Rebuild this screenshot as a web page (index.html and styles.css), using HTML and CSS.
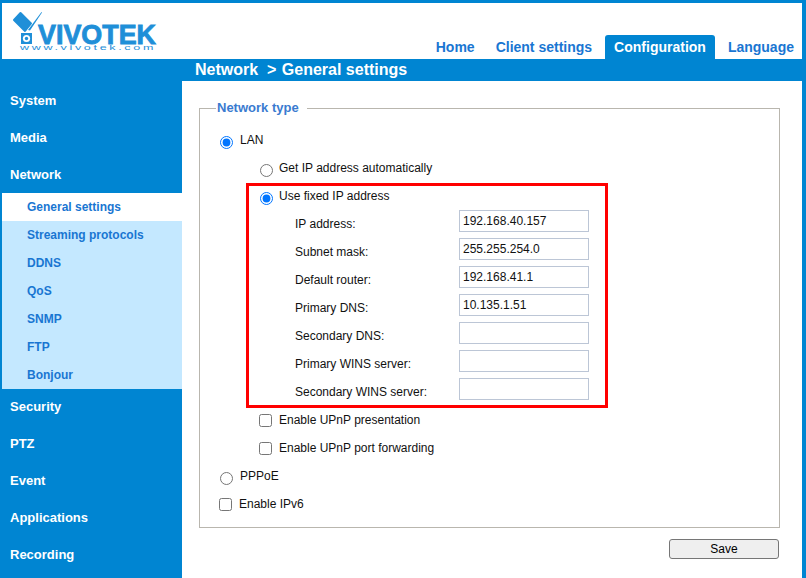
FILE: index.html
```html
<!DOCTYPE html>
<html lang="en">
<head>
<meta charset="utf-8">
<title>VIVOTEK Network General settings</title>
<link rel="stylesheet" href="styles.css">
</head>
<body>
<div class="page">
  <header class="top">
    <svg class="logo" width="150" height="44" viewBox="11 10 150 44" aria-label="VIVOTEK">
      <path class="head" d="M14 20 L20.5 13 L31 23.5 L25 31 Z"/>
      <path class="ink" d="M28 30 L41.5 12 L42 12.5 L30 30.5 Z"/>
      <rect class="ink" x="21" y="33" width="11" height="11"/>
      <circle cx="26.5" cy="38.5" r="3.6" fill="#fff"/>
      <circle class="ink" cx="26.5" cy="38.5" r="1.7"/>
      <text class="brand" x="38" y="44" textLength="118" lengthAdjust="spacingAndGlyphs">VIVOTEK</text>
      <text class="url" x="20" y="50" textLength="136" lengthAdjust="spacingAndGlyphs">www.vivotek.com</text>
    </svg>
    <nav class="tabs">
      <a class="tab first">Home</a>
      <a class="tab">Client settings</a>
      <a class="tab active">Configuration</a>
      <a class="tab">Language</a>
    </nav>
  </header>
  <div class="titlebar">Network &nbsp;<span class="crumb">&gt;</span> General settings</div>
  <div class="body">
    <aside class="side">
      <div class="item">System</div>
      <div class="item">Media</div>
      <div class="item">Network</div>
      <ul class="sub">
        <li class="current">General settings</li>
        <li>Streaming protocols</li>
        <li>DDNS</li>
        <li>QoS</li>
        <li>SNMP</li>
        <li>FTP</li>
        <li>Bonjour</li>
      </ul>
      <div class="item">Security</div>
      <div class="item">PTZ</div>
      <div class="item">Event</div>
      <div class="item">Applications</div>
      <div class="item">Recording</div>
    </aside>
    <main class="main">
      <fieldset class="box">
        <legend class="legend">Network type</legend>
        <label class="row lv1"><input class="rd" type="radio" name="t" checked><span>LAN</span></label>
        <label class="row lv2"><input class="rd" type="radio" name="ip"><span>Get IP address automatically</span></label>
        <div class="marked">
          <label class="row lv2"><input class="rd" type="radio" name="ip" checked><span>Use fixed IP address</span></label>
          <div class="row field"><span class="fl">IP address:</span><input class="txt" type="text" value="192.168.40.157"></div>
          <div class="row field"><span class="fl">Subnet mask:</span><input class="txt" type="text" value="255.255.254.0"></div>
          <div class="row field"><span class="fl">Default router:</span><input class="txt" type="text" value="192.168.41.1"></div>
          <div class="row field"><span class="fl">Primary DNS:</span><input class="txt" type="text" value="10.135.1.51"></div>
          <div class="row field"><span class="fl">Secondary DNS:</span><input class="txt" type="text"></div>
          <div class="row field"><span class="fl">Primary WINS server:</span><input class="txt" type="text"></div>
          <div class="row field"><span class="fl">Secondary WINS server:</span><input class="txt" type="text"></div>
          <div class="redbox"></div>
        </div>
        <label class="row lv2c"><input class="ck" type="checkbox"><span>Enable UPnP presentation</span></label>
        <label class="row lv2c"><input class="ck" type="checkbox"><span>Enable UPnP port forwarding</span></label>
        <label class="row lv1"><input class="rd" type="radio" name="t"><span>PPPoE</span></label>
        <label class="row lv1c"><input class="ck" type="checkbox"><span>Enable IPv6</span></label>
      </fieldset>
      <div class="actions"><button class="save" type="button">Save</button></div>
    </main>
  </div>
</div>
</body>
</html>
```
FILE: styles.css
```css
* { box-sizing: border-box; }
html, body { margin: 0; padding: 0; background: #fff; }
body { font-family: "Liberation Sans", Arial, sans-serif; font-size: 12px; color: #111; }
.page {
  width: 806px; height: 578px; overflow: hidden;
  border-top: 3px solid #0085d2; border-left: 2px solid #0085d2; border-right: 4px solid #0085d2;
  display: flex; flex-direction: column;
}
.top { height: 56px; display: flex; justify-content: space-between; align-items: flex-end; flex: none; }
.logo { display: block; margin: 0 0 5px 9px; overflow: hidden; }
.ink { fill: #1f8fd8; }
.head { fill: #1f8fd8; stroke: #1f8fd8; stroke-width: 2; stroke-linejoin: round; }
.brand { font: bold 28px "Liberation Sans", Arial, sans-serif; fill: #1f8fd8; stroke: #1f8fd8; stroke-width: .9; }
.url { font: 7px "Liberation Sans", Arial, sans-serif; letter-spacing: 1.5px; fill: #1f8fd8; }
.tabs { display: flex; gap: 4px; margin-right: -1px; }
.tab { display: block; height: 24px; padding: 0 9px; line-height: 25px; font-size: 14px; font-weight: bold; color: #1976d2; border-radius: 3px 3px 0 0; }
.tab.first { margin-right: -1px; }
.tab.active { background: #0085d2; color: #fff; }
.titlebar { height: 22px; flex: none; background: #0085d2; color: #fff; font-size: 16px; font-weight: bold; line-height: 22px; padding-left: 193px; }
.crumb { margin-right: 1px; }
.body { flex: 1; display: flex; min-height: 0; }
.side { width: 180px; flex: none; background: #0085d2; padding-top: 1px; }
.item { height: 37px; line-height: 38px; padding-left: 8px; font-size: 13px; font-weight: bold; color: #fff; }
.sub { list-style: none; margin: 0 0 -1px; padding: 0; background: #c4e8ff; }
.sub li { height: 28px; line-height: 28px; padding-left: 25px; font-size: 12px; font-weight: bold; color: #1976d2; }
.sub li.current { background: #fff; }
.main { flex: 1; padding: 0 22px 0 17px; }
.box { margin: 19px 0 0; padding: 9px 0 9px; width: 581px; border: 1px solid #b9b6ae; min-width: 0; }
.legend { margin-left: 16px; padding: 0 8px 2px 1px; font-size: 13px; font-weight: bold; color: #3a7bd0; }
.row { display: flex; height: 28px; align-items: center; }
.lv1 { padding-left: 20px; }
.lv2 { padding-left: 60px; }
.lv1c { padding-left: 19px; }
.lv2c { padding-left: 59px; }
.rd, .ck { width: 13px; height: 13px; margin: 0; flex: none; }
.rd { margin-top: 4px; margin-right: 7px; }
.lv2 .rd { margin-right: 6px; }
.ck { margin-top: 1px; margin-right: 7px; }
.field { padding-left: 95px; align-items: flex-start; }
.fl { width: 164px; line-height: 28px; }
.txt { width: 130px; height: 22px; border: 1px solid #bcc6d6; padding: 0 3px; font: 12px "Liberation Sans", Arial, sans-serif; color: #111; background: #fff; outline: none; border-radius: 0; }
.marked { position: relative; }
.redbox { position: absolute; left: 46px; top: 1px; width: 362px; height: 225px; border: 3px solid #f00; pointer-events: none; }
.actions { display: flex; justify-content: flex-end; width: 580px; margin-top: 11px; }
.save { width: 110px; height: 20px; padding: 0; font: 12px "Liberation Sans", Arial, sans-serif; color: #000; background: #efefef; border: 1px solid #767676; border-radius: 3px; }
```
